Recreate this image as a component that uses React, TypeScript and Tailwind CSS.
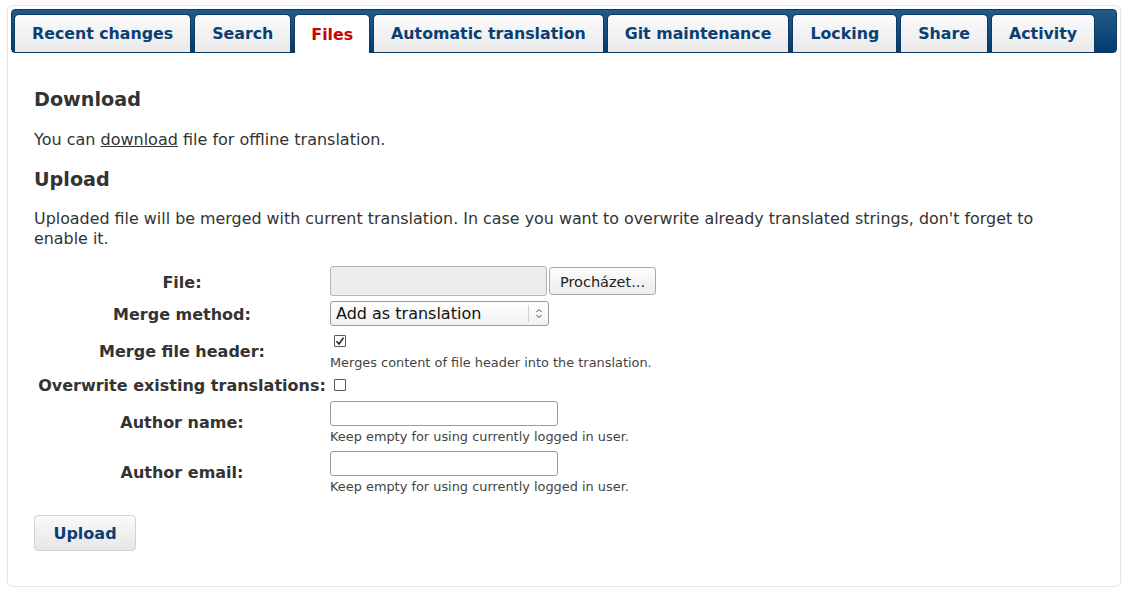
import React from "react";

const tabs = [
  "Recent changes",
  "Search",
  "Files",
  "Automatic translation",
  "Git maintenance",
  "Locking",
  "Share",
  "Activity",
];

const CheckBox = ({ checked }: { checked?: boolean }) => (
  <span className="inline-flex w-[12px] h-[12px] border border-[#5a5a5a] bg-white rounded-[1px] items-center justify-center">
    {checked && (
      <svg width="10" height="10" viewBox="0 0 10 10">
        <path d="M1.5 5.2 L4 8 L8.6 1.6" fill="none" stroke="#222" strokeWidth="1.6" />
      </svg>
    )}
  </span>
);

const Help = ({ children, className }: { children: React.ReactNode; className: string }) => (
  <div className={"text-[12.9px] leading-[16px] text-[#444] " + className}>{children}</div>
);

const Label = ({ children }: { children: React.ReactNode }) => (
  <div className="flex items-center justify-center text-center font-bold text-[16px] leading-[18px] text-[#333] px-[2px] pt-[2px]">
    {children}
  </div>
);

export default function App() {
  return (
    <div className="bg-white min-h-[600px] pt-[5px] px-[7px]" style={{ fontFamily: '"DejaVu Sans", Verdana, sans-serif' }}>
      <div className="border border-[#e6e6e6] rounded-[5px] p-[3px] h-[582px]">
        {/* Tab bar */}
        <div className="h-[44px] rounded-[4px] bg-gradient-to-b from-[#235a89] to-[#003c70] border border-[#0b3a63] pl-[2px] pt-[4px] flex gap-[3px] items-end">
          {tabs.map((t) => {
            const active = t === "Files";
            return (
              <div
                key={t}
                className={
                  active
                    ? "h-[39px] -mb-[1px] pt-[1px] px-[16px] rounded-t-[5px] border border-[#0b3a63] border-b-0 bg-white flex items-center text-[15.8px] font-bold text-[#cc0000]"
                    : "h-[38px] pt-[1px] px-[17px] rounded-t-[5px] border border-[#0b3a63] border-b-0 bg-gradient-to-b from-[#fbfbfb] to-[#e9e9e9] flex items-center text-[15.8px] font-bold text-[#0a3f73]"
                }
              >
                {t}
              </div>
            );
          })}
        </div>

        {/* Panel */}
        <div className="px-[23px] pt-[35px] text-[#333]">
          <h2 className="text-[19.2px] font-bold leading-[24px]">Download</h2>
          <p className="text-[16px] leading-[20px] mt-[18px]">
            You can <span className="underline">download</span> file for offline translation.
          </p>
          <h2 className="text-[19.2px] font-bold leading-[24px] mt-[18px]">Upload</h2>
          <p className="text-[15.9px] leading-[20px] mt-[17px] pr-[30px]">
            Uploaded file will be merged with current translation. In case you want to overwrite already translated strings, don't forget to enable it.
          </p>

          <div className="grid grid-cols-[296px_1fr] mt-[15px]">
            <Label>File:</Label>
            <div className="pt-[2px] pb-[3px] flex items-center gap-[2px]">
              <div className="w-[217px] h-[30px] bg-[#ececec] border border-[#b5b5b5] rounded-[3px]" />
              <div className="w-[107px] h-[28px] pt-[4px] border border-[#a9a9a9] rounded-[3px] bg-gradient-to-b from-[#fdfdfd] to-[#ececec] flex items-center justify-center text-[14.5px] text-[#222]">
                Procházet...
              </div>
            </div>

            <Label>Merge method:</Label>
            <div className="pt-[2px] pb-[2px]">
              <div className="w-[219px] h-[25px] border border-[#9b9b9b] rounded-[3px] bg-gradient-to-b from-[#ffffff] to-[#f1f1f1] flex items-center">
                <span className="flex-1 pl-[5px] text-[16px] text-[#111]">Add as translation</span>
                <span className="w-[20px] h-[17px] border-l border-[#cfcfcf] flex items-center justify-center">
                  <svg width="8" height="11" viewBox="0 0 8 11">
                    <path d="M1.5 4 L4 1.5 L6.5 4 M1.5 7 L4 9.5 L6.5 7" fill="none" stroke="#444" strokeWidth="1" />
                  </svg>
                </span>
              </div>
            </div>

            <Label>Merge file header:</Label>
            <div className="pt-[7px] pb-[2px]">
              <div className="pl-[4px] h-[12px] flex items-center">
                <CheckBox checked />
              </div>
              <Help className="mt-[8px]">Merges content of file header into the translation.</Help>
            </div>

            <Label>Overwrite existing translations:</Label>
            <div className="pt-[6px] pb-[6px]">
              <div className="pl-[4px] h-[12px] flex items-center">
                <CheckBox />
              </div>
            </div>

            <Label>Author name:</Label>
            <div className="pt-[4px] pb-[2px]">
              <div className="w-[228px] h-[25px] border border-[#9b9b9b] rounded-[3px] bg-white" />
              <Help className="mt-[3px]">Keep empty for using currently logged in user.</Help>
            </div>

            <Label>Author email:</Label>
            <div className="pt-[4px] pb-[2px]">
              <div className="w-[228px] h-[25px] border border-[#9b9b9b] rounded-[3px] bg-white" />
              <Help className="mt-[3px]">Keep empty for using currently logged in user.</Help>
            </div>
          </div>

          <button className="mt-[18px] w-[102px] h-[36px] pt-[1px] border border-[#d3d3d3] rounded-[4px] bg-gradient-to-b from-[#fafafa] to-[#e6e6e6] text-[16px] font-bold text-[#0a3f73]">
            Upload
          </button>
        </div>
      </div>
    </div>
  );
}
